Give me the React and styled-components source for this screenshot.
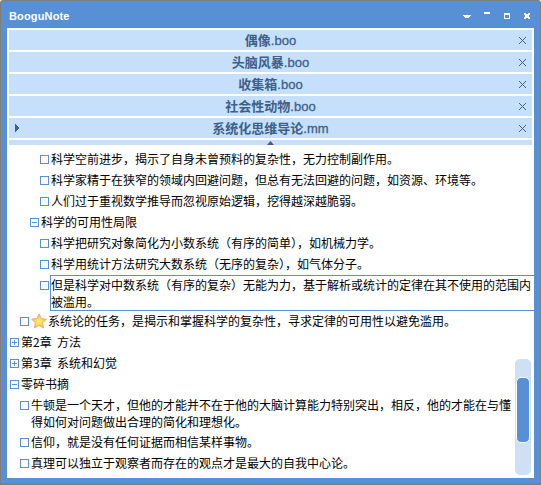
import React from 'react';
import styled, { createGlobalStyle } from 'styled-components';

const GlobalStyle = createGlobalStyle`
  html, body { margin: 0; padding: 0; background: #fff; }
  body { font-family: "Noto Sans CJK SC", "Liberation Sans", sans-serif; }
`;

const Win = styled.div`
  width: 541px;
  height: 485px;
  box-sizing: border-box;
  background: #5790d5;
  border: solid #7f7f7f;
  border-width: 1px 1px 2px 1px;
  border-radius: 3px 3px 0 0;
  display: flex;
  flex-direction: column;
  overflow: hidden;
`;

const TitleBar = styled.div`
  height: 27px;
  flex: none;
  display: flex;
  align-items: center;
  padding: 2px 9px 0 8px;
  box-sizing: border-box;
`;

const Title = styled.div`
  flex: 1;
  color: #fff;
  font: bold 11px "Liberation Sans", sans-serif;
  letter-spacing: 0.15px;
`;

const TitleButtons = styled.div`
  display: flex;
  gap: 12px;
  svg { display: block; width: 8px; height: 8px; shape-rendering: crispEdges; }
`;

const Body = styled.div`
  flex: 1;
  margin: 0 6px 5px 6px;
  background: #fff;
  position: relative;
  display: flex;
  flex-direction: column;
  min-height: 0;
  overflow: hidden;
`;

const Tabs = styled.div`
  flex: none;
  padding: 2px 2px 0 2px;
  display: flex;
  flex-direction: column;
  gap: 2px;
`;

const Tab = styled.div`
  height: 20px;
  background: #c6e0fb;
  color: #3d6088;
  display: flex;
  align-items: center;
  padding: 0 6px;
  font-size: 13px;
  font-weight: bold;
`;

const TabMark = styled.svg`
  width: 4px;
  height: 8px;
  flex: none;
  margin-right: 3px;
  shape-rendering: crispEdges;
`;

const TabText = styled.div`
  flex: 1;
  text-align: center;
  line-height: 20px;
  white-space: nowrap;
  span {
    font: normal 13px "Liberation Sans", sans-serif;
    -webkit-text-stroke: 0.3px #3d6088;
  }
`;

const CloseX = styled.svg`
  width: 7px;
  height: 7px;
  flex: none;
  shape-rendering: crispEdges;
`;

const Strip = styled.div`
  height: 5px;
  background: #c6e0fb;
  display: flex;
  justify-content: center;
  align-items: center;
`;

const Tree = styled.div`
  flex: 1;
  padding: 5px 0 0 0;
  min-height: 0;
  overflow: hidden;
  display: flex;
  flex-direction: column;
  gap: 4px;
`;

const Row = styled.div`
  display: flex;
  flex: none;
  align-items: flex-start;
  padding-left: ${p => 3 + p.$level * 10}px;
  padding-right: ${p => (p.$wrapped ? 18 : 0)}px;
  margin-bottom: ${p => (p.$wrapped ? -1 : 0)}px;
`;

const Box = styled.svg`
  width: 9px;
  height: 9px;
  flex: none;
  margin-top: 5px;
  margin-right: 2px;
  shape-rendering: crispEdges;
`;

const Star = styled.svg`
  width: 16px;
  height: 16px;
  flex: none;
  margin: 1px 1px -1px 0;
`;

const Text = styled.div`
  font-size: 12px;
  line-height: 17px;
  color: #000;
  flex: 1;
  min-width: 0;
  white-space: pre-wrap;
  ${p => p.$selected && `
    border: 1px solid #5790d5;
    border-right: none;
    margin: -1px 0 -3px -1px;
    padding-right: 2px;
  `}
`;

const ScrollTrack = styled.div`
  position: absolute;
  left: 508px;
  top: 331px;
  width: 16px;
  height: 116px;
  background: #cde0f4;
  border-radius: 5px;
`;

const ScrollThumb = styled.div`
  position: absolute;
  left: 1px;
  top: 18px;
  width: 14px;
  height: 66px;
  box-sizing: border-box;
  background: #5790d5;
  border: 1px solid #fff;
  border-radius: 5px;
`;

const tabs = [
  { name: '偶像', ext: '.boo' },
  { name: '头脑风暴', ext: '.boo' },
  { name: '收集箱', ext: '.boo' },
  { name: '社会性动物', ext: '.boo' },
  { name: '系统化思维导论', ext: '.mm', active: true },
];

const rows = [
  { level: 3, text: '科学空前进步，揭示了自身未曾预料的复杂性，无力控制副作用。' },
  { level: 3, text: '科学家精于在狭窄的领域内回避问题，但总有无法回避的问题，如资源、环境等。' },
  { level: 3, text: '人们过于重视数学推导而忽视原始逻辑，挖得越深越脆弱。' },
  { level: 2, icon: 'minus', text: '科学的可用性局限' },
  { level: 3, text: '科学把研究对象简化为小数系统（有序的简单），如机械力学。' },
  { level: 3, text: '科学用统计方法研究大数系统（无序的复杂），如气体分子。' },
  { level: 3, selected: true, text: '但是科学对中数系统（有序的复杂）无能为力，基于解析或统计的定律在其不使用的范围内被滥用。' },
  { level: 1, star: true, text: '系统论的任务，是揭示和掌握科学的复杂性，寻求定律的可用性以避免滥用。' },
  { level: 0, icon: 'plus', text: '第2章  方法' },
  { level: 0, icon: 'plus', text: '第3章  系统和幻觉' },
  { level: 0, icon: 'minus', text: '零碎书摘' },
  { level: 1, wrapped: true, text: '牛顿是一个天才，但他的才能并不在于他的大脑计算能力特别突出，相反，他的才能在与懂得如何对问题做出合理的简化和理想化。' },
  { level: 1, text: '信仰，就是没有任何证据而相信某样事物。' },
  { level: 1, text: '真理可以独立于观察者而存在的观点才是最大的自我中心论。' },
];

const NodeBox = ({ icon }) => (
  <Box viewBox="0 0 9 9">
    <rect x="0.5" y="0.5" width="8" height="8" fill="#fff" stroke="#5790d5" />
    {icon && <rect x="2" y="4" width="5" height="1" fill="#5790d5" />}
    {icon === 'plus' && <rect x="4" y="2" width="1" height="5" fill="#5790d5" />}
  </Box>
);

const StarIcon = () => (
  <Star viewBox="0 0 16 16">
    <defs>
      <radialGradient id="starFill" cx="50%" cy="55%" r="55%">
        <stop offset="0%" stopColor="#fff27a" />
        <stop offset="70%" stopColor="#fbd02e" />
        <stop offset="100%" stopColor="#f6a623" />
      </radialGradient>
    </defs>
    <path
      d="M8 .8 10.2 5.6 15.4 6.2 11.5 9.7 12.6 15 8 12.3 3.4 15 4.5 9.7.6 6.2 5.8 5.6Z"
      fill="url(#starFill)"
      stroke="#e8a98f"
      strokeWidth="1"
      strokeLinejoin="round"
    />
  </Star>
);

export default function App() {
  return (
    <>
      <GlobalStyle />
      <Win>
        <TitleBar>
          <Title>BooguNote</Title>
          <TitleButtons>
            <svg viewBox="0 0 8 8"><path d="M0 3h8v1H7v1H6v1H2V5H1V4H0z" fill="#fff" /></svg>
            <svg viewBox="0 0 8 8"><rect x="1" y="0" width="6" height="2" fill="#fff" /></svg>
            <svg viewBox="0 0 8 8"><path d="M1 1h6v6H1zM2 3v3h4V3z" fill="#fff" fillRule="evenodd" /></svg>
            <svg viewBox="0 0 8 8"><path d="M1 1h2v1h2V1h2v2H6v2h1v2H5V6H3v1H1V5h1V3H1z" fill="#fff" /></svg>
          </TitleButtons>
        </TitleBar>
        <Body>
          <Tabs>
            {tabs.map(t => (
              <Tab key={t.name}>
                <TabMark viewBox="0 0 4 8">
                  {t.active && <path d="M0 0h1v1h1v1h1v1h1v2H3v1H2v1H1v1H0z" fill="#3d6088" />}
                </TabMark>
                <TabText>{t.name}<span>{t.ext}</span></TabText>
                <CloseX viewBox="0 0 7 7">
                  <path d="M0 0h1v1h1v1h1v1h1V2h1V1h1V0h1v1H6v1H5v1H4v1h1v1h1v1h1v1H6V6H5V5H4V4H3v1H2v1H1v1H0V6h1V5h1V4h1V3H2V2H1V1H0z" fill="#3d6088" />
                </CloseX>
              </Tab>
            ))}
            <Strip>
              <svg width="7" height="4" viewBox="0 0 7 4"><path d="M3.5 0 7 4H0z" fill="#3d6088" /></svg>
            </Strip>
          </Tabs>
          <Tree>
            {rows.map(r => (
              <Row key={r.text} $level={r.level} $wrapped={r.wrapped}>
                <NodeBox icon={r.icon} />
                {r.star && <StarIcon />}
                <Text $selected={r.selected}>{r.text}</Text>
              </Row>
            ))}
          </Tree>
          <ScrollTrack>
            <ScrollThumb />
          </ScrollTrack>
        </Body>
      </Win>
    </>
  );
}
